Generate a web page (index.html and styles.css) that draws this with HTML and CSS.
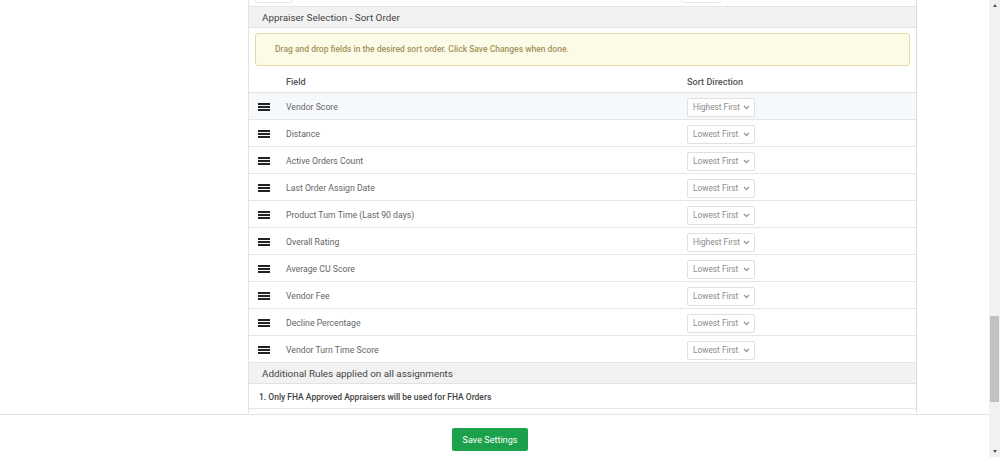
FILE: index.html
```html
<!DOCTYPE html>
<html lang="en">
<head>
    <meta charset="UTF-8">
    <meta name="viewport" content="width=device-width, initial-scale=1.0">
    <title>Appraiser Selection</title>
    <link rel="stylesheet" href="styles.css">
</head>
<body>
    <div class="window">
        <div class="page">
            <div class="content">
                <div class="panel">
                    <!-- row scrolled off above -->
                    <div class="prev-row">
                        <span class="prev-cell prev-left"></span>
                        <span class="prev-cell prev-right"></span>
                    </div>

                    <div class="section-head">Appraiser Selection - Sort Order</div>

                    <div class="alert">Drag and drop fields in the desired sort order. Click Save Changes when done.</div>

                    <div class="sort-table">
                        <div class="sort-row table-head">
                            <span class="handle-col"></span>
                            <span class="field-col">Field</span>
                            <span class="dir-col">Sort Direction</span>
                        </div>
                        <div id="rows"></div>
                    </div>

                    <div class="section-head rules-head">Additional Rules applied on all assignments</div>
                    <div class="rule">1. Only FHA Approved Appraisers will be used for FHA Orders</div>
                </div>
            </div>

            <div class="footer">
                <button class="save-btn">Save Settings</button>
            </div>
        </div>

        <div class="scrollbar">
            <span class="arrow up"></span>
            <div class="track"><div class="thumb"></div></div>
            <span class="arrow down"></span>
        </div>
    </div>

    <script>
        // Campos de orden
        const campos = [
            ["Vendor Score", "Highest First"],
            ["Distance", "Lowest First"],
            ["Active Orders Count", "Lowest First"],
            ["Last Order Assign Date", "Lowest First"],
            ["Product Turn Time (Last 90 days)", "Lowest First"],
            ["Overall Rating", "Highest First"],
            ["Average CU Score", "Lowest First"],
            ["Vendor Fee", "Lowest First"],
            ["Decline Percentage", "Lowest First"],
            ["Vendor Turn Time Score", "Lowest First"]
        ];

        const rows = document.getElementById("rows");
        campos.forEach(([campo, dir], i) => {
            const row = document.createElement("div");
            row.className = "sort-row" + (i === 0 ? " hover" : "");
            row.innerHTML =
                '<span class="handle-col"><span class="handle"><i></i><i></i><i></i></span></span>' +
                '<span class="field-col">' + campo + '</span>' +
                '<span class="dir-col"><span class="select">' + dir +
                '<svg width="7" height="5" viewBox="0 0 7 5"><path d="M1 1l2.5 2.5L6 1" fill="none" stroke="#999" stroke-width="1.3"/></svg></span></span>';
            rows.appendChild(row);
        });
    </script>
</body>
</html>
```

FILE: styles.css
```css
html, body {
    margin: 0;
    padding: 0;
    height: 100%;
    overflow: hidden;
}
body {
    font-family: Roboto, "Liberation Sans", Arial, sans-serif;
    background-color: #ffffff;
    color: #555;
}
.window {
    display: flex;
    height: 457px;
}
.page {
    flex: 1;
    display: flex;
    flex-direction: column;
}
.content {
    height: 414px;
    padding-left: 248px;
    padding-right: 72px;
    box-sizing: border-box;
}
.panel {
    height: 413px;
    border-left: 1px solid #e3e3e3;
    border-right: 1px solid #dcdcdc;
    box-sizing: border-box;
}
.prev-row {
    height: 6px;
    border-bottom: 1px solid #e6e6e6;
    position: relative;
}
.prev-cell {
    position: absolute;
    top: -4px;
    height: 5px;
    border: 1px solid #e8e8e8;
    border-radius: 3px;
}
.prev-left {
    left: 6px;
    width: 36px;
}
.prev-right {
    left: 432px;
    width: 38px;
}
.section-head {
    height: 20px;
    line-height: 21px;
    padding-left: 13px;
    background-color: #f2f2f2;
    border-bottom: 1px solid #e2e2e2;
    font-size: 9.9px;
    color: #444;
}
.alert {
    margin: 5px 6px 6px 6px;
    height: 31px;
    line-height: 31px;
    padding-left: 19px;
    background-color: #fcfbe8;
    border: 1px solid #e2dba8;
    border-radius: 3px;
    font-size: 8.5px;
    font-weight: 500;
    color: #a4935c;
}
.sort-row {
    display: flex;
    align-items: center;
    border-bottom: 1px solid #e6e6e6;
    font-size: 8.7px;
    color: #666;
}
#rows .sort-row {
    height: 24px;
    padding-top: 2px;
}
.sort-row.hover {
    background-color: #f6f9fc;
}
.table-head {
    height: 20px;
    font-size: 9.1px;
    font-weight: 500;
    color: #555;
    border-bottom-color: #e2e2e2;
}
.handle-col {
    width: 37px;
    padding-left: 9px;
    box-sizing: border-box;
    display: flex;
}
.field-col {
    width: 401px;
}
.dir-col {
    flex: 1;
}
.handle {
    display: flex;
    flex-direction: column;
    gap: 1px;
}
.handle i {
    display: block;
    width: 12px;
    height: 2px;
    background-color: #222;
}
.select {
    display: inline-flex;
    align-items: center;
    justify-content: space-between;
    width: 68px;
    height: 19px;
    padding: 0 4px 0 5px;
    box-sizing: border-box;
    border: 1px solid #e0e0e0;
    border-radius: 2px;
    background-color: #fff;
    font-size: 8.3px;
    color: #8c8c8c;
}
.rules-head {
    height: 20px;
    line-height: 21px;
}
.rule {
    height: 24px;
    line-height: 27px;
    padding-left: 10px;
    border-bottom: 1px solid #e6e6e6;
    font-size: 8.5px;
    font-weight: 500;
    color: #444;
}
.footer {
    flex: 1;
    border-top: 1px solid #e3e3e3;
    display: flex;
    justify-content: center;
    padding-top: 13px;
    padding-right: 9px;
}
.save-btn {
    width: 76px;
    height: 23px;
    padding: 0;
    border: none;
    border-radius: 2px;
    background-color: #1ba14b;
    color: #fff;
    font-family: Roboto, "Liberation Sans", Arial, sans-serif;
    font-size: 9.1px;
    cursor: pointer;
}
.scrollbar {
    width: 11px;
    background-color: #f1f1f1;
    display: flex;
    flex-direction: column;
    align-items: center;
}
.arrow {
    width: 0;
    height: 0;
    border-left: 2.5px solid transparent;
    border-right: 2.5px solid transparent;
    margin: 4px 0;
}
.arrow.up {
    border-bottom: 3px solid #555;
}
.arrow.down {
    border-top: 3px solid #555;
}
.track {
    flex: 1;
    width: 100%;
    padding-top: 305px;
    box-sizing: border-box;
}
.thumb {
    width: 9px;
    height: 86px;
    margin: 0 auto;
    background-color: #c1c1c1;
}
```
